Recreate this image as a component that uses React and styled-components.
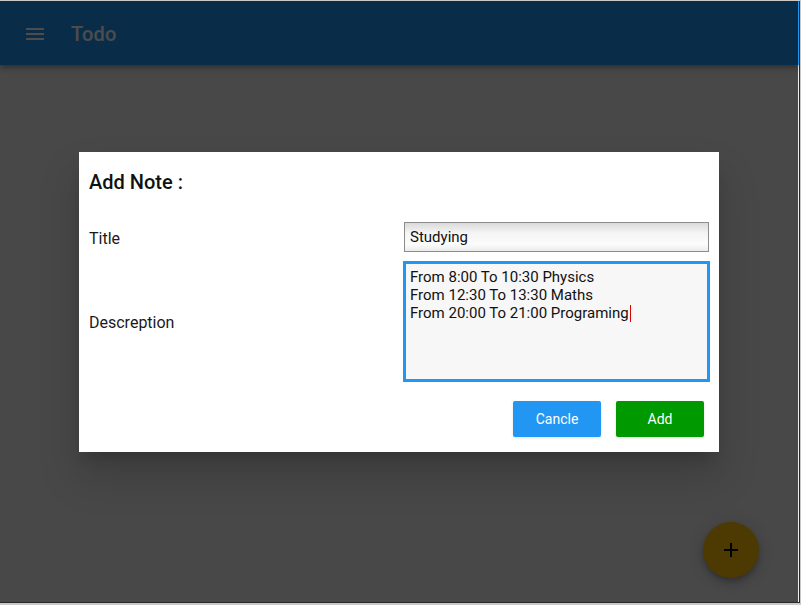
import React from 'react';
import styled, { createGlobalStyle } from 'styled-components';

const GlobalStyle = createGlobalStyle`
  html, body {
    margin: 0;
    padding: 0;
    background: #c9c9c9;
    font-family: Roboto, "Liberation Sans", Arial, sans-serif;
  }
  * { box-sizing: border-box; }
`;

const lines = [
  'From 8:00 To 10:30 Physics',
  'From 12:30 To 13:30 Maths',
  'From 20:00 To 21:00 Programing',
];

export default function App() {
  return (
    <>
      <GlobalStyle />
      <Screen>
        <AppBar>
          <MenuButton aria-label="menu">
            <svg width="24" height="24" viewBox="0 0 24 24" fill="currentColor">
              <path d="M3 18h18v-2H3v2zm0-5h18v-2H3v2zm0-7v2h18V6H3z" />
            </svg>
          </MenuButton>
          <AppTitle>Todo</AppTitle>
        </AppBar>
        <Body />
        <Fab aria-label="add">
          <svg width="14" height="14" viewBox="0 0 14 14">
            <path d="M7 0v14M0 7h14" stroke="#000" strokeWidth="2" />
          </svg>
        </Fab>
        <Backdrop>
          <Dialog>
            <DialogTitle>Add Note :</DialogTitle>
            <Form>
              <Label>Title</Label>
              <TextInput defaultValue="Studying" />
              <Label>Descreption</Label>
              <TextArea role="textbox">
                {lines.map((line, i) => (
                  <div key={i}>
                    {line}
                    {i === lines.length - 1 && <Caret />}
                  </div>
                ))}
              </TextArea>
            </Form>
            <Actions>
              <Button $bg="#2196f3">Cancle</Button>
              <Button $bg="#009900">Add</Button>
            </Actions>
          </Dialog>
        </Backdrop>
      </Screen>
    </>
  );
}

const Screen = styled.div`
  position: relative;
  margin-top: 1px;
  width: 800px;
  height: 602px;
  border-right: 1px solid #2a2a2a;
  border-bottom: 1px solid #2a2a2a;
  background: #f0f0f0;
  display: flex;
  flex-direction: column;
  overflow: hidden;
`;

const AppBar = styled.header`
  height: 64px;
  flex-shrink: 0;
  display: flex;
  align-items: center;
  padding: 2px 0 0 23px;
  background: #2196f3;
  color: #fff;
  box-shadow: 0 2px 4px -1px rgba(0, 0, 0, 0.2), 0 4px 5px 0 rgba(0, 0, 0, 0.14),
    0 1px 10px 0 rgba(0, 0, 0, 0.12);
`;

const MenuButton = styled.div`
  display: flex;
  color: #fff;
`;

const AppTitle = styled.h1`
  margin: 0 0 0 24px;
  font-size: 20px;
  font-weight: 500;
  letter-spacing: 0.2px;
`;

const Body = styled.main`
  flex: 1;
`;

const Fab = styled.button`
  position: absolute;
  right: 40px;
  bottom: 24px;
  width: 56px;
  height: 56px;
  border: none;
  border-radius: 50%;
  background: #ffc107;
  display: flex;
  align-items: center;
  justify-content: center;
  box-shadow: 0 3px 5px -1px rgba(0, 0, 0, 0.2), 0 6px 10px 0 rgba(0, 0, 0, 0.14),
    0 1px 18px 0 rgba(0, 0, 0, 0.12);
`;

const Backdrop = styled.div`
  position: absolute;
  inset: 0 1px 0 0;
  background: rgba(0, 0, 0, 0.7);
  display: flex;
  align-items: center;
  justify-content: center;
  padding-top: 1px;
`;

const Dialog = styled.section`
  width: 640px;
  height: 300px;
  background: #fff;
  padding: 10px 10px 15px;
  box-shadow: 0 11px 15px -7px rgba(0, 0, 0, 0.2), 0 24px 38px 3px rgba(0, 0, 0, 0.14);
`;

const DialogTitle = styled.h2`
  margin: 0;
  height: 40px;
  line-height: 40px;
  font-size: 20px;
  font-weight: 500;
  color: #111;
`;

const Form = styled.div`
  margin-top: 20px;
  display: grid;
  grid-template-columns: 1fr 305px;
  row-gap: 9px;
  align-items: center;
`;

const Label = styled.label`
  font-size: 16px;
  color: #1a1a1a;
  padding-top: 2px;
`;

const TextInput = styled.input`
  width: 305px;
  height: 30px;
  border: 1px solid #8c8c8c;
  padding: 0 5px;
  font-family: inherit;
  font-size: 15px;
  color: #111;
  background: linear-gradient(#dadada, #f4f4f4 35%, #fcfcfc 75%, #ececec);
  outline: none;
`;

const TextArea = styled.div`
  width: 305px;
  height: 119px;
  margin: 1px 0;
  border: 2px solid #2196f3;
  box-shadow: 0 0 0 1px #2196f3;
  background: #f7f7f7;
  padding: 4px 4px;
  font-size: 15px;
  line-height: 18px;
  color: #111;
`;

const Caret = styled.span`
  display: inline-block;
  width: 1px;
  height: 17px;
  margin-left: 1px;
  vertical-align: -4px;
  background: #e00000;
`;

const Actions = styled.div`
  margin-top: 19px;
  padding-right: 5px;
  display: flex;
  justify-content: flex-end;
  gap: 15px;
`;

const Button = styled.button`
  width: 88px;
  height: 36px;
  border: none;
  border-radius: 2px;
  background: ${(p) => p.$bg};
  color: #fff;
  font-family: inherit;
  font-size: 14px;
  box-shadow: 0 1px 3px rgba(0, 0, 0, 0.12);
`;
